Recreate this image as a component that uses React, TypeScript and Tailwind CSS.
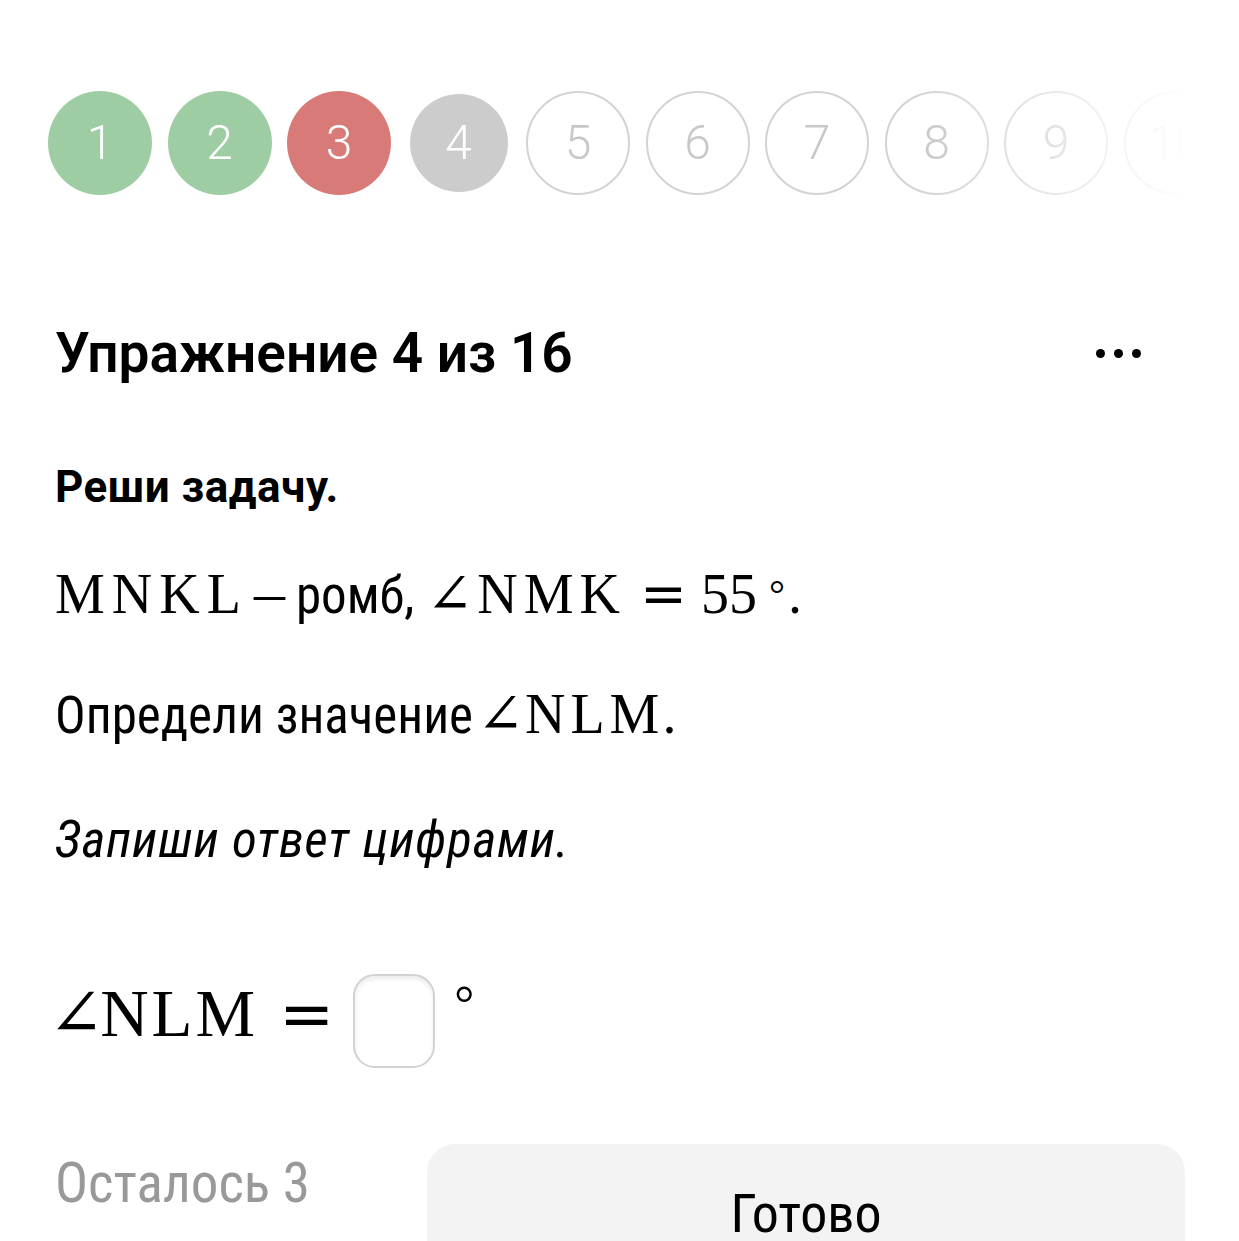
const steps = [
  { n: 1, kind: 'ok' },
  { n: 2, kind: 'ok' },
  { n: 3, kind: 'bad' },
  { n: 4, kind: 'cur' },
  { n: 5, kind: 'todo' },
  { n: 6, kind: 'todo' },
  { n: 7, kind: 'todo' },
  { n: 8, kind: 'todo' },
  { n: 9, kind: 'todo' },
  { n: 10, kind: 'todo' },
];

function Step({ n, kind }: { n: number; kind: string }) {
  const base =
    'flex shrink-0 items-center justify-center rounded-full font-light leading-none text-[48px]';
  if (kind === 'ok')
    return <div className={`${base} h-[104px] w-[104px] bg-[#9fcda3] text-white`}>{n}</div>;
  if (kind === 'bad')
    return <div className={`${base} h-[104px] w-[104px] bg-[#d87b78] text-white`}>{n}</div>;
  if (kind === 'cur')
    return (
      <div className="flex h-[104px] w-[104px] shrink-0 items-center justify-center">
        <div className={`${base} h-[98px] w-[98px] bg-[#cccccc] text-white`}>{n}</div>
      </div>
    );
  return (
    <div className={`${base} h-[104px] w-[104px] border-[2.5px] border-[#d3d3d3] text-[#c8c8c8]`}>
      {n}
    </div>
  );
}

export default function App() {
  return (
    <div className="h-[1241px] w-full overflow-hidden bg-white font-['Roboto_Condensed','Noto_Sans',sans-serif] text-black">
      {/* progress */}
      <div className="ml-[48px] mt-[91px] w-[1142px] overflow-hidden [mask-image:linear-gradient(to_right,black_76%,transparent_100%)]">
        <div className="flex gap-[15.5px] font-['Roboto','Noto_Sans',sans-serif]">
          {steps.map((s) => (
            <Step key={s.n} n={s.n} kind={s.kind} />
          ))}
        </div>
      </div>

      {/* heading */}
      <div className="mt-[131px] flex items-center justify-between pl-[55px] pr-[98px]">
        <h1 className="font-['Roboto','Noto_Sans',sans-serif] text-[55px] font-semibold leading-[54px]">
          Упражнение 4 из 16
        </h1>
        <div className="flex items-center gap-[9px]">
          <span className="h-[9px] w-[9px] rounded-full bg-black" />
          <span className="h-[9px] w-[9px] rounded-full bg-black" />
          <span className="h-[9px] w-[9px] rounded-full bg-black" />
        </div>
      </div>

      <div className="px-[55px]">
        <p className="mt-[86px] font-['Roboto','Noto_Sans',sans-serif] text-[44px] font-bold leading-[42px] tracking-[0.5px]">
          Реши задачу.
        </p>

        <p className="mt-[56px] whitespace-nowrap text-[51px] leading-[64px]">
          <span className="font-['Liberation_Serif','DejaVu_Serif',serif] text-[56px] leading-[0px] tracking-[7px]">
            MNKL
          </span>
          <span className="ml-[6px] font-['Liberation_Serif','DejaVu_Serif',serif] text-[62px] leading-[0px]">
            –
          </span>
          <span className="ml-[11px]">ромб,</span>
          <span className="ml-[12px] font-['Liberation_Serif','DejaVu_Serif',serif] text-[56px] leading-[0px]">
            ∠
          </span>
          <span className="ml-[4px] font-['Liberation_Serif','DejaVu_Serif',serif] text-[56px] leading-[0px] tracking-[6px]">
            NMK
          </span>
          <span className="ml-[14px] font-['DejaVu_Serif',serif] text-[56px] leading-[0px]">=</span>
          <span className="ml-[14px] font-['Liberation_Serif','DejaVu_Serif',serif] text-[56px] leading-[0px]">
            55
          </span>
          <span className="relative ml-[12px] top-[-5px] font-['Liberation_Serif','DejaVu_Serif',serif] text-[40px] leading-[0px]">
            °
          </span>
          <span className="ml-[3px] font-['Liberation_Serif','DejaVu_Serif',serif] text-[56px] leading-[0px]">
            .
          </span>
        </p>

        <p className="mt-[56px] whitespace-nowrap text-[51px] leading-[64px]">
          Определи значение
          <span className="ml-[4px] font-['Liberation_Serif','DejaVu_Serif',serif] text-[56px] leading-[0px]">
            ∠
          </span>
          <span className="ml-[1px] font-['Liberation_Serif','DejaVu_Serif',serif] text-[56px] leading-[0px] tracking-[5px]">
            NLM
          </span>
          <span className="-ml-[2px] font-['Liberation_Serif','DejaVu_Serif',serif] text-[56px] leading-[0px]">
            .
          </span>
        </p>

        <p className="mt-[60px] text-[51px] italic leading-[64px] tracking-[0.8px]">Запиши ответ цифрами.</p>

        {/* answer */}
        <div className="mt-[102px] flex h-[94px] items-start">
          <span className="-ml-[7px] mt-[6px] whitespace-nowrap font-['Liberation_Serif','DejaVu_Serif',serif] text-[67px] leading-[67px]">
            ∠<span className="-ml-[4px] tracking-[3px]">NLM</span>
          </span>
          <span className="ml-[21px] mt-[6px] font-['DejaVu_Serif',serif] text-[66px] leading-[67px]">=</span>
          <div className="ml-[19px] h-[94px] w-[82px] shrink-0 rounded-[22px] border-2 border-[#d2d2d2] bg-white shadow-[inset_0_3px_4px_rgba(0,0,0,0.08)]" />
          <span className="ml-[19px] mt-[6px] font-['Liberation_Serif','DejaVu_Serif',serif] text-[50px] leading-[46px]">
            °
          </span>
        </div>
      </div>

      {/* bottom */}
      <div className="mt-[76px] flex items-start">
        <span className="ml-[55px] mt-[12px] w-[372px] shrink-0 whitespace-nowrap text-[55px] leading-[54px] text-[#999999]">
          Осталось 3
        </span>
        <button className="flex h-[140px] w-[758px] shrink-0 items-start justify-center rounded-[28px] bg-[#f3f3f3] pt-[43px] text-[54px] leading-[54px] text-black">
          Готово
        </button>
      </div>
    </div>
  );
}
